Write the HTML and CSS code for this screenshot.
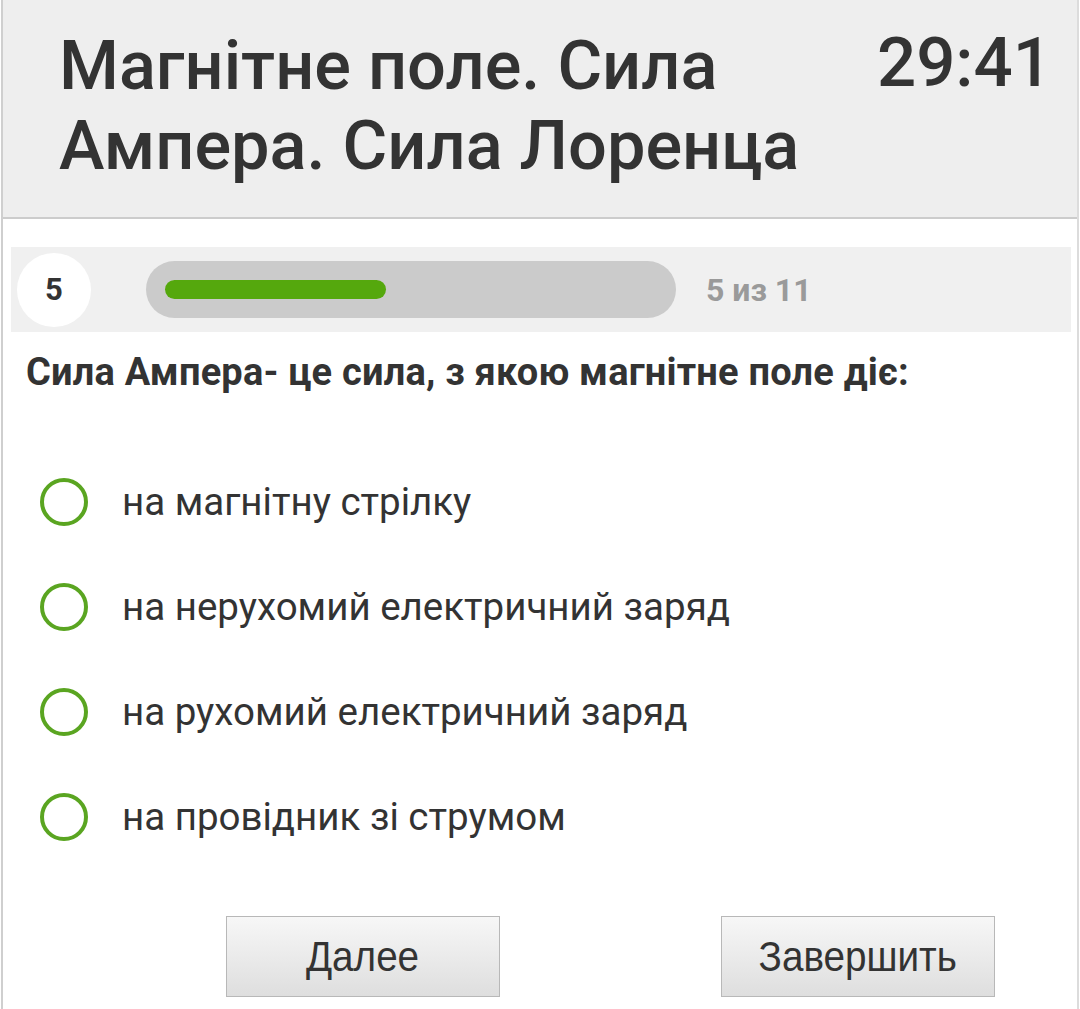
FILE: index.html
```html
<!DOCTYPE html>
<html lang="uk">
<head>
    <meta charset="UTF-8">
    <meta name="viewport" content="width=device-width, initial-scale=1.0">
    <title>Тест</title>
    <link rel="stylesheet" href="styles.css">
</head>
<body>
    <div class="page">
        <!-- заголовок теста и таймер -->
        <div class="header">
            <h1 class="title">Магнітне поле. Сила Ампера. Сила Лоренца</h1>
            <div class="timer">29:41</div>
        </div>

        <!-- прогресс -->
        <div class="progressStrip">
            <div class="qNum">5</div>
            <div class="track">
                <div class="fill" style="width: 44.9%"></div>
            </div>
            <div class="counter">5 из 11</div>
        </div>

        <p class="question">Сила Ампера- це сила, з якою магнітне поле діє:</p>

        <div class="answers">
            <label class="answer"><span class="radio"></span>на магнітну стрілку</label>
            <label class="answer"><span class="radio"></span>на нерухомий електричний заряд</label>
            <label class="answer"><span class="radio"></span>на рухомий електричний заряд</label>
            <label class="answer"><span class="radio"></span>на провідник зі струмом</label>
        </div>

        <div class="buttons">
            <button class="btn"><span>Далее</span></button>
            <button class="btn"><span>Завершить</span></button>
        </div>
    </div>
</body>
</html>
```

FILE: styles.css
```css
html, body {
    margin: 0;
    padding: 0;
    background-color: #fff;
}

body {
    font-family: Roboto, "Noto Sans", Arial, sans-serif;
    color: #333;
}

.page {
    box-sizing: border-box;
    width: 1078px;
    min-height: 1009px;
    margin-left: 1px;
    border-left: 2px solid #cfcfcf;
    border-right: 2px solid #dcdcdc;
}

.header {
    display: flex;
    justify-content: space-between;
    align-items: flex-start;
    box-sizing: border-box;
    height: 219px;
    padding: 26px 25px 0 56px;
    background-color: #eeeeee;
    border-bottom: 2px solid #cccccc;
}

.title {
    margin: 0;
    font-size: 68.5px;
    line-height: 80px;
    font-weight: 500;
    max-width: 790px;
}

.timer {
    font-size: 69px;
    line-height: 80px;
    font-weight: 500;
    margin-top: -3px;
}

.progressStrip {
    display: flex;
    align-items: center;
    height: 85px;
    margin: 28px 6px 0 8px;
    padding-left: 6px;
    background-color: #f0f0f0;
}

.qNum {
    width: 74px;
    height: 74px;
    border-radius: 50%;
    background-color: #fff;
    display: flex;
    align-items: center;
    justify-content: center;
    font-size: 31px;
    font-weight: 700;
}

.track {
    width: 530px;
    height: 57px;
    margin-left: 55px;
    padding: 19px;
    box-sizing: border-box;
    border-radius: 29px;
    background-color: #cbcbcb;
}

.fill {
    height: 19px;
    border-radius: 10px;
    background-color: #55a80d;
}

.counter {
    margin-left: 30px;
    font-size: 32px;
    font-weight: 700;
    color: #9a9a9a;
}

.question {
    margin: 20px 0 0 23px;
    font-size: 38px;
    line-height: 40px;
    letter-spacing: 0.2px;
    font-weight: 700;
}

.answers {
    margin-top: 57px;
}

.answer {
    display: flex;
    align-items: center;
    height: 105px;
    padding-left: 37px;
    font-size: 38.5px;
}

.radio {
    width: 48px;
    height: 48px;
    box-sizing: border-box;
    border: 4px solid #5aa521;
    border-radius: 50%;
    margin-right: 34px;
    flex-shrink: 0;
}

.buttons {
    display: flex;
    gap: 221px;
    margin-top: 47px;
    padding-left: 223px;
}

.btn {
    width: 274px;
    height: 81px;
    padding: 0;
    border: 1px solid #b8b8b8;
    background: linear-gradient(#f7f7f7, #dedede);
    color: #333;
    font-family: "Liberation Sans", Arial, sans-serif;
    font-size: 42px;
    cursor: pointer;
}

.btn span {
    display: inline-block;
    transform: scaleX(0.92);
}
```
